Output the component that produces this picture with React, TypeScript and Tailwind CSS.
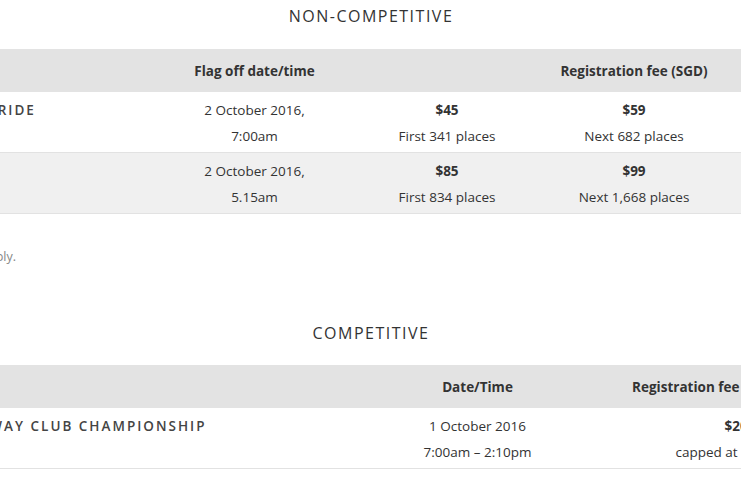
const nonCompetitive = [
  {
    name: "THE STRAITS TIMES RIDE",
    date: ["2 October 2016,", "7:00am"],
    fees: [
      { price: "$45", note: "First 341 places" },
      { price: "$59", note: "Next 682 places" },
      { price: "$69", note: "Remaining places" },
    ],
  },
  {
    name: "THE SPORTIVE",
    date: ["2 October 2016,", "5.15am"],
    fees: [
      { price: "$85", note: "First 834 places" },
      { price: "$99", note: "Next 1,668 places" },
      { price: "$109", note: "Remaining places" },
    ],
  },
]

function SectionTitle({ children }: { children: string }) {
  return (
    <h2 className="text-center text-[16px] leading-[24px] tracking-[1.5px] text-[#333] font-normal uppercase">
      {children}
    </h2>
  )
}

export default function App() {
  return (
    <div className="w-[741px] h-[486px] overflow-hidden bg-white text-[#333] font-['Open_Sans','DejaVu_Sans',sans-serif] text-[13.5px]">
      <div className="w-[1188px] ml-[-223px]">
        {/* non-competitive */}
        <div className="pt-[4px] mb-[21px]">
          <SectionTitle>Non-competitive</SectionTitle>
        </div>
        <table className="w-[1138px] table-fixed border-collapse">
          <colgroup>
            <col className="w-[379px]" />
            <col className="w-[197px]" />
            <col className="w-[188px]" />
            <col className="w-[186px]" />
            <col className="w-[188px]" />
          </colgroup>
          <thead>
            <tr className="bg-[#e3e3e3] h-[43px] leading-[26px] font-bold">
              <th className="text-left pl-[58px]">Category</th>
              <th className="text-center">Flag off date/time</th>
              <th colSpan={3} className="text-center">Registration fee (SGD)</th>
            </tr>
          </thead>
          <tbody>
            {nonCompetitive.map((row, i) => (
              <tr
                key={row.name}
                className={`border-b border-[#e2e2e2] leading-[26px] ${i % 2 === 1 ? "bg-[#f0f0f0]" : "bg-white"}`}
              >
                <td className="align-top pt-[5px] pb-[3px] pl-[58px] text-left tracking-[2px] font-semibold text-[#444]">
                  {row.name}
                </td>
                <td className="pt-[5px] pb-[3px] text-center">
                  {row.date[0]}
                  <br />
                  {row.date[1]}
                </td>
                {row.fees.map((f) => (
                  <td key={f.price} className="pt-[5px] pb-[3px] text-center">
                    <span className="font-bold">{f.price}</span>
                    <br />
                    {f.note}
                  </td>
                ))}
              </tr>
            ))}
          </tbody>
        </table>

        <p className="mt-[33px] pl-[40px] text-[12.5px] leading-[20px] text-[#888]">
          Other terms and conditions apply.
        </p>

        {/* competitive */}
        <div className="mt-[54px] mb-[20px]">
          <SectionTitle>Competitive</SectionTitle>
        </div>
        <table className="w-[1138px] table-fixed border-collapse">
          <colgroup>
            <col className="w-[613px]" />
            <col className="w-[175px]" />
            <col className="w-[350px]" />
          </colgroup>
          <thead>
            <tr className="bg-[#e3e3e3] h-[43px] leading-[26px] font-bold">
              <th className="text-left pl-[58px]">Category</th>
              <th className="text-center">Date/Time</th>
              <th className="text-center pr-[6px]">Registration fee (SGD) per rider</th>
            </tr>
          </thead>
          <tbody>
            <tr className="border-b border-[#e2e2e2] leading-[26px] bg-white">
              <td className="align-top pt-[5px] pb-[3px] pl-[56px] text-left tracking-[2px] font-semibold text-[#444]">
                OCBC CYCLE SPEEDWAY CLUB CHAMPIONSHIP
              </td>
              <td className="pt-[5px] pb-[3px] text-center">
                1 October 2016
                <br />
                7:00am – 2:10pm
              </td>
              <td className="pt-[5px] pb-[3px] text-center">
                <span className="font-bold">$200</span>
                <br />
                capped at 300 riders
              </td>
            </tr>
          </tbody>
        </table>
      </div>
    </div>
  )
}
